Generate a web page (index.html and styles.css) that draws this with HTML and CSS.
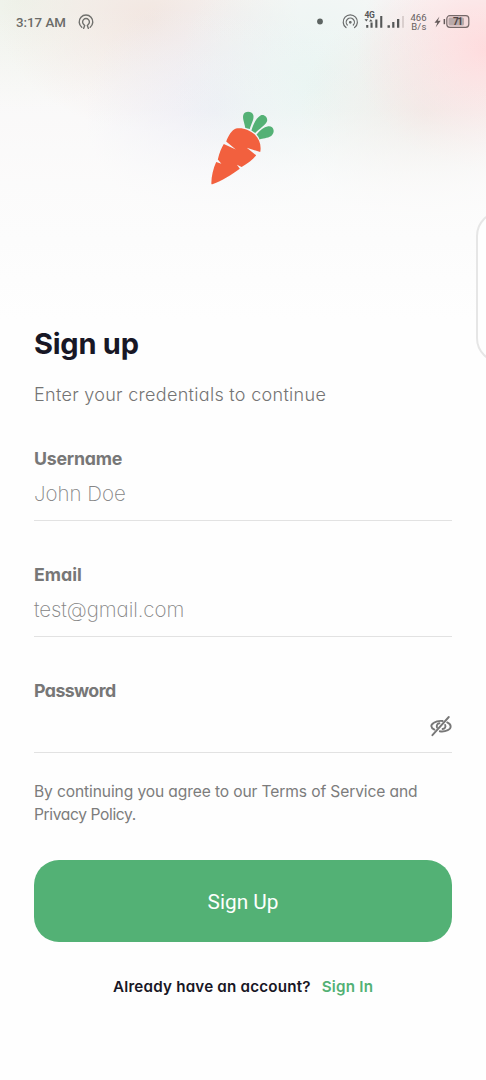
FILE: index.html
```html
<!DOCTYPE html>
<html lang="en">
<head>
<meta charset="utf-8">
<meta name="viewport" content="width=device-width">
<title>Sign up</title>
<link rel="stylesheet" href="styles.css">
</head>
<body>
<div class="screen">
  <header class="status">
    <span class="time">3:17 AM</span>
    <svg class="cast" width="16" height="16" viewBox="0 0 16 16" fill="none" stroke="#70706d" stroke-width="1.4" stroke-linecap="round" stroke-linejoin="round"><path d="M3.8 13.2A6.8 6.8 0 1 1 12.2 13.2M5.9 10.6A3.4 3.4 0 1 1 10.1 10.6L9.3 11.5L10.4 14.4M5.6 14.4L6.7 11.5L5.9 10.6"/></svg>
    <svg class="indicators" width="156" height="24" viewBox="0 0 156 24">
      <circle cx="6" cy="11.5" r="2.9" fill="#5d6462"/>
      <g fill="none" stroke="#696b6b" stroke-width="1.2" stroke-linecap="round"><path d="M32 17.6A7.1 7.1 0 1 1 40.6 17.6M33.3 15A4.1 4.1 0 1 1 39.3 15"/><circle cx="36.3" cy="12.3" r=".8" fill="#696b6b"/></g>
      <text class="net" x="50.5" y="8.2">4G</text>
      <g fill="#555757"><path d="M50.5 9.2h3.6l-1.8 2.2zM55 11.4h3.6l-1.8-2.2zM52.2 15h2.1v2.8h-2.1zM56.5 12.4h2.1v5.4h-2.1zM61.3 9.5h2.1v8.3h-2.1zM66.2 6h2.1v11.8h-2.1zM73.5 15.2h2.4v2.6h-2.4zM78.2 12h2.2v5.8h-2.2zM83 9h2.3v8.8H83z"/></g>
      <path d="M88 6h2v11.8h-2z" fill="#dacfce"/>
      <text class="rate" x="96.5" y="10.8" textLength="16">466</text>
      <text class="rate" x="97.3" y="19.8" textLength="15">B/s</text>
      <path d="M125.5 6.5L120.5 12.8H123.3L121.6 17.5L126.7 10.8H123.8Z" fill="#655b5b"/>
      <path d="M129.6 9h1.5v5.2h-1.5z" fill="#655b5b"/>
      <rect x="132.8" y="5.7" width="22" height="11.6" rx="3" fill="#f3d9da" stroke="#756969" stroke-width="1.2"/>
      <rect x="134.5" y="7.4" width="15.5" height="8.2" rx="1.5" fill="#b9aaaa"/>
      <text class="charge" x="138.9" y="15.2" textLength="10">71</text>
    </svg>
  </header>
  <main class="content">
    <svg class="logo" width="66" height="78" viewBox="0 0 66 78">
      <path fill="#f2603e" d="M1.4 74C1.1 68 3 59 6.2 52.1L11.4 53.8L7.8 49.4C9.3 43 11.6 37.5 13.8 34L25.8 39.4L16.2 31.4C18.3 26 21.8 19.8 26 18.6C31.5 17 39.8 19.8 44.8 24.6C49.4 29 51.6 35.8 50.2 42L36.8 37.8L46.2 45.3C43.2 49.4 37.8 53.6 31.6 57L26.9 54.8L29.8 58.8C21.5 65 11.6 71 3 74Q1.7 74.5 1.4 74Z"/>
      <g fill="#54b175"><path d="M35.2 17.8C34.4 12.5 32.3 8.6 33.3 5C34.5.8 41.8.8 43.3 5C44.4 9.2 41.2 13.7 39.8 19Q37.5 18.8 35.2 17.8Z"/><path d="M41.4 20.6C43.6 13.6 46.2 8 50.5 5.5C54.5 3.7 58.5 8.1 56.8 11.8C54.7 15.7 50 18.4 45.2 22.9Z"/><path d="M46.6 24.4C50 20.3 53.8 17 58.2 16.3C64 15.6 65.6 22.7 61.2 25.9C57.2 28.6 52.7 27.8 49.6 29.4Q48.5 26.4 46.6 24.4Z"/></g>
    </svg>
    <h1 class="title">Sign up</h1>
    <p class="subtitle">Enter your credentials to continue</p>
    <form class="fields">
      <div class="field"><label class="label name">Username</label><div class="value john">John Doe</div></div>
      <div class="field"><label class="label email">Email</label><div class="value mail">test@gmail.com</div></div>
      <div class="field"><label class="label pass">Password</label><div class="value secret">
        <svg width="22" height="24" viewBox="0 0 22 24" fill="none" stroke="#777" stroke-width="1.9" stroke-linecap="round"><path d="M2.4 21.2L18.8 3"/><path d="M4.4 15.6C.4 13.6.4 10.6 3.8 8.8C6.5 7.1 9.5 6.7 12.6 7M17.2 8.4C21.8 10.4 21.6 14.4 17.8 16.2C15.2 17.4 12.3 17.7 9.8 17.3"/><path d="M7 13.4C6.2 11.4 7.4 9.6 9.4 9.3M15.2 11C16 13 14.8 14.8 12.6 15"/></svg>
      </div></div>
    </form>
    <p class="terms"><span class="line-one">By continuing you agree to our Terms of Service and</span><br><span class="line-two">Privacy Policy.</span></p>
    <button class="submit" type="button">Sign Up</button>
    <p class="footer"><span class="question">Already have an account?</span><a class="signin">Sign In</a></p>
  </main>
  <aside class="edge-panel"></aside>
</div>
</body>
</html>
```
FILE: styles.css
```css
* { box-sizing: border-box; }
body { margin: 0; }
h1, p { margin: 0; }
.screen {
  position: relative;
  width: 486px;
  height: 1080px;
  overflow: hidden;
  font-family: Inter, "Liberation Sans", sans-serif;
  font-feature-settings: "cv11";
  white-space: nowrap;
  background:
    linear-gradient(to bottom, rgba(252,252,252,0) 0, rgba(252,252,252,.2) 110px, rgba(252,252,252,.75) 185px, #fcfcfc 240px, #fefefe 320px),
    radial-gradient(ellipse 130px 120px at 486px 50px, #ffd9db, rgba(255,217,219,.45) 50%, rgba(255,217,219,0)),
    radial-gradient(ellipse 125px 120px at 425px 115px, #ece9e4, rgba(236,233,228,0)),
    radial-gradient(ellipse 140px 150px at 315px 85px, #e7f4f1, rgba(231,244,241,0)),
    radial-gradient(ellipse 130px 120px at 215px 110px, #ebebf4, rgba(235,235,244,0)),
    radial-gradient(ellipse 150px 110px at 150px 20px, #f2e6e0, rgba(242,230,224,0)),
    radial-gradient(ellipse 150px 110px at 20px 0, #eef2e9, rgba(238,242,233,0)),
    #f9f8f8;
}
.status { display: flex; align-items: center; height: 44px; padding: 0 16px; color: #6b6b68; }
.time { width: 50px; padding-top: 1px; font: 500 13.3px/20px Roboto, sans-serif; }
.cast { margin-left: 12px; }
.indicators { margin-left: auto; }
.net { font: 700 8.5px Roboto, sans-serif; letter-spacing: -.3px; fill: #555757; }
.rate { font: 400 9.5px Roboto, sans-serif; fill: #665f5f; }
.charge { font: 700 10px Roboto, sans-serif; fill: #514646; }
.content { display: flex; flex-direction: column; padding: 66px 34px 0; }
.logo { margin-left: 176px; }
.title { margin-top: 138px; font-size: 29px; font-weight: 650; line-height: 36px; letter-spacing: -.25px; color: #181725; }
.subtitle { margin-top: 21px; font-size: 18px; font-weight: 300; line-height: 24px; letter-spacing: .3px; color: #747474; }
.fields { display: flex; flex-direction: column; gap: 41px; margin-top: 39px; }
.field { height: 75px; padding-top: 1px; border-bottom: 1px solid #e2e2e2; }
.label { display: block; font-size: 17.8px; font-weight: 700; line-height: 24px; color: #777; }
.name { letter-spacing: -.25px; }
.pass { letter-spacing: -.6px; }
.value { margin-top: 9px; font-size: 20.5px; font-weight: 200; line-height: 28px; color: #858585; }
.mail { letter-spacing: -.06px; }
.secret { display: flex; justify-content: flex-end; align-items: center; padding-top: 2px; }
.terms { margin-top: 27px; font-size: 15.6px; font-weight: 400; line-height: 23px; color: #7c7c7c; }
.line-one { letter-spacing: -.12px; }
.line-two { letter-spacing: -.38px; }
.submit { height: 82px; margin-top: 34px; padding: 2px 0 0; border: 0; border-radius: 25px; background: #53b175; color: #fcfffd; font: 400 20.8px Roboto, sans-serif; }
.footer { display: flex; gap: 11px; margin: 35px 0 0 79px; font-size: 15.2px; font-weight: 600; line-height: 20px; letter-spacing: .2px; color: #181725; }
.signin { color: #53b175; }
.edge-panel { position: absolute; left: 476px; top: 211px; width: 60px; height: 152px; border: 2px solid #e6e6e6; border-radius: 25px; background: #fefefe; }
```
